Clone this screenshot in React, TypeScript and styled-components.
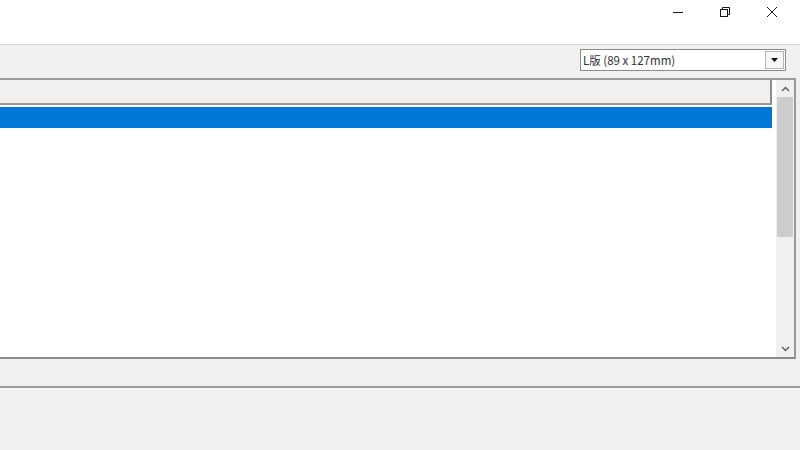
import React from "react"
import styled, { createGlobalStyle } from "styled-components"

const GlobalStyle = createGlobalStyle`
  html, body {
    margin: 0;
    padding: 0;
    width: 800px;
    height: 450px;
    overflow: hidden;
    background: #f0f0f0;
    font-family: "Noto Sans CJK JP", "Noto Sans", sans-serif;
  }
`

const Window = styled.div`
  width: 800px;
  height: 450px;
  display: flex;
  flex-direction: column;
  background: #f0f0f0;
`

const TitleBar = styled.div`
  height: 44px;
  background: #ffffff;
  border-bottom: 1px solid #d9d9d9;
  display: flex;
  justify-content: flex-end;
  align-items: flex-start;
  padding-right: 5px;
`

const CaptionButton = styled.div`
  width: 47px;
  height: 24px;
  display: flex;
  align-items: center;
  justify-content: center;
  color: #1a1a1a;
`

const Toolbar = styled.div`
  height: 33px;
  display: flex;
  justify-content: flex-end;
  align-items: flex-start;
  padding: 4px 14px 0 0;
  box-sizing: border-box;
`

const Combo = styled.div`
  width: 206px;
  height: 22px;
  box-sizing: border-box;
  background: #ffffff;
  border: 1px solid #8a8a8a;
  display: flex;
  align-items: stretch;
`

const ComboText = styled.div`
  flex: 1;
  font-size: 11.5px;
  line-height: 20px;
  padding-left: 2px;
  color: #333333;
  white-space: nowrap;
`

const ComboButton = styled.div`
  width: 17px;
  margin: 1px;
  border: 1px solid #b5b5b5;
  background: #f7f7f7;
  display: flex;
  align-items: center;
  justify-content: center;
`

const ListBox = styled.div`
  height: 281px;
  margin-right: 4px;
  box-sizing: border-box;
  background: #ffffff;
  border: 2px solid #9a9a9a;
  border-left: none;
  border-bottom-color: #8c8c8c;
  display: flex;
`

const ListMain = styled.div`
  flex: 1;
  display: flex;
  flex-direction: column;
  padding-right: 3px;
`

const Header = styled.div`
  height: 23px;
  background: #f0f0f0;
  border-bottom: 2px solid #9a9a9a;
  border-right: 2px solid #8c8c8c;
`

const Row = styled.div<{ $selected?: boolean }>`
  height: 21px;
  margin-top: 2px;
  background: ${(p) => (p.$selected ? "#0078d7" : "transparent")};
`

const ScrollBar = styled.div`
  width: 18px;
  background: #f0f0f0;
  display: flex;
  flex-direction: column;
  border-left: 1px solid #ffffff;
`

const ScrollArrow = styled.div`
  height: 17px;
  display: flex;
  align-items: center;
  justify-content: center;
`

const Track = styled.div`
  flex: 1;
  display: flex;
  flex-direction: column;
  padding: 0 1px;
`

const Thumb = styled.div`
  height: 140px;
  background: #cdcdcd;
`

const StatusArea = styled.div`
  height: 27px;
  border-bottom: 2px solid #9a9a9a;
`

const Rest = styled.div`
  flex: 1;
  border-top: 1px solid #fafafa;
`

export default function App() {
  return (
    <Window>
      <GlobalStyle />
      <TitleBar>
        <CaptionButton>
          <svg width="12" height="12" viewBox="0 0 12 12">
            <path d="M1 6.5h10" stroke="#1a1a1a" strokeWidth="1" />
          </svg>
        </CaptionButton>
        <CaptionButton>
          <svg width="12" height="12" viewBox="0 0 12 12" fill="none" stroke="#1a1a1a" strokeWidth="1">
            <rect x="1.5" y="3.5" width="7" height="7" />
            <path d="M3.5 3.5V1.5h7v7h-2" />
          </svg>
        </CaptionButton>
        <CaptionButton>
          <svg width="12" height="12" viewBox="0 0 12 12">
            <path d="M1 1l10 10M11 1L1 11" stroke="#1a1a1a" strokeWidth="1" />
          </svg>
        </CaptionButton>
      </TitleBar>
      <Toolbar>
        <Combo>
          <ComboText>L版 (89 x 127mm)</ComboText>
          <ComboButton>
            <svg width="7" height="4" viewBox="0 0 7 4">
              <path d="M0 0h7L3.5 4z" fill="#111" />
            </svg>
          </ComboButton>
        </Combo>
      </Toolbar>
      <ListBox>
        <ListMain>
          <Header />
          <Row $selected />
        </ListMain>
        <ScrollBar>
          <ScrollArrow>
            <svg width="9" height="6" viewBox="0 0 9 6">
              <path d="M1 5l3.5-3.5L8 5" stroke="#606060" strokeWidth="1.5" fill="none" />
            </svg>
          </ScrollArrow>
          <Track>
            <Thumb />
          </Track>
          <ScrollArrow>
            <svg width="9" height="6" viewBox="0 0 9 6">
              <path d="M1 1l3.5 3.5L8 1" stroke="#606060" strokeWidth="1.5" fill="none" />
            </svg>
          </ScrollArrow>
        </ScrollBar>
      </ListBox>
      <StatusArea />
      <Rest />
    </Window>
  )
}
